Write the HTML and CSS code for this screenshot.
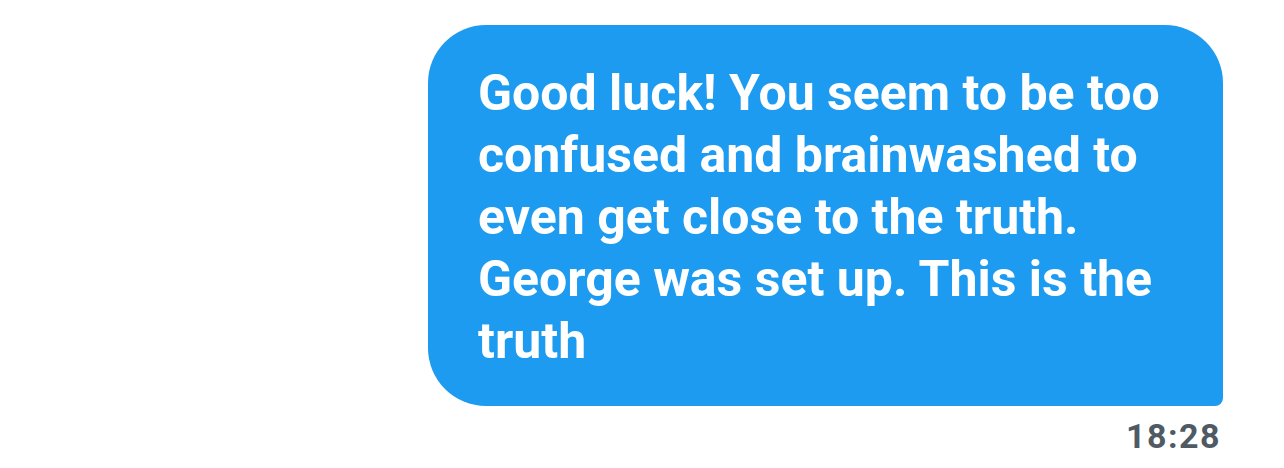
FILE: index.html
```html
<!DOCTYPE html>
<html>
<head>
<meta charset="utf-8">
<link rel="stylesheet" href="styles.css">
</head>
<body>
<div class="chat">
  <div class="bubble">
    <p class="msg">Good luck! You seem to be too<br>confused and brainwashed to<br>even get close to the truth.<br>George was set up. This is the<br>truth</p>
  </div>
  <div class="time">18:28</div>
</div>
</body>
</html>
```
FILE: styles.css
```css
html, body {
  margin: 0;
  padding: 0;
  background: #ffffff;
}
.chat {
  display: flex;
  flex-direction: column;
  align-items: flex-end;
  padding: 25px 61px 0 0;
}
.bubble {
  width: 795px;
  height: 381px;
  box-sizing: border-box;
  background: #1d9bf0;
  border-radius: 58px 58px 8px 58px;
  padding: 37px 10px 0 50px;
}
.msg {
  margin: 0;
  color: #ffffff;
  font-family: Roboto, "Liberation Sans", sans-serif;
  font-weight: 700;
  font-size: 50px;
  line-height: 62px;
}
.time {
  margin-top: 10px;
  margin-right: 2px;
  font-family: Roboto, "Liberation Sans", sans-serif;
  font-weight: 700;
  font-size: 34px;
  letter-spacing: 1.5px;
  line-height: 40px;
  color: #4f5a64;
}
```
